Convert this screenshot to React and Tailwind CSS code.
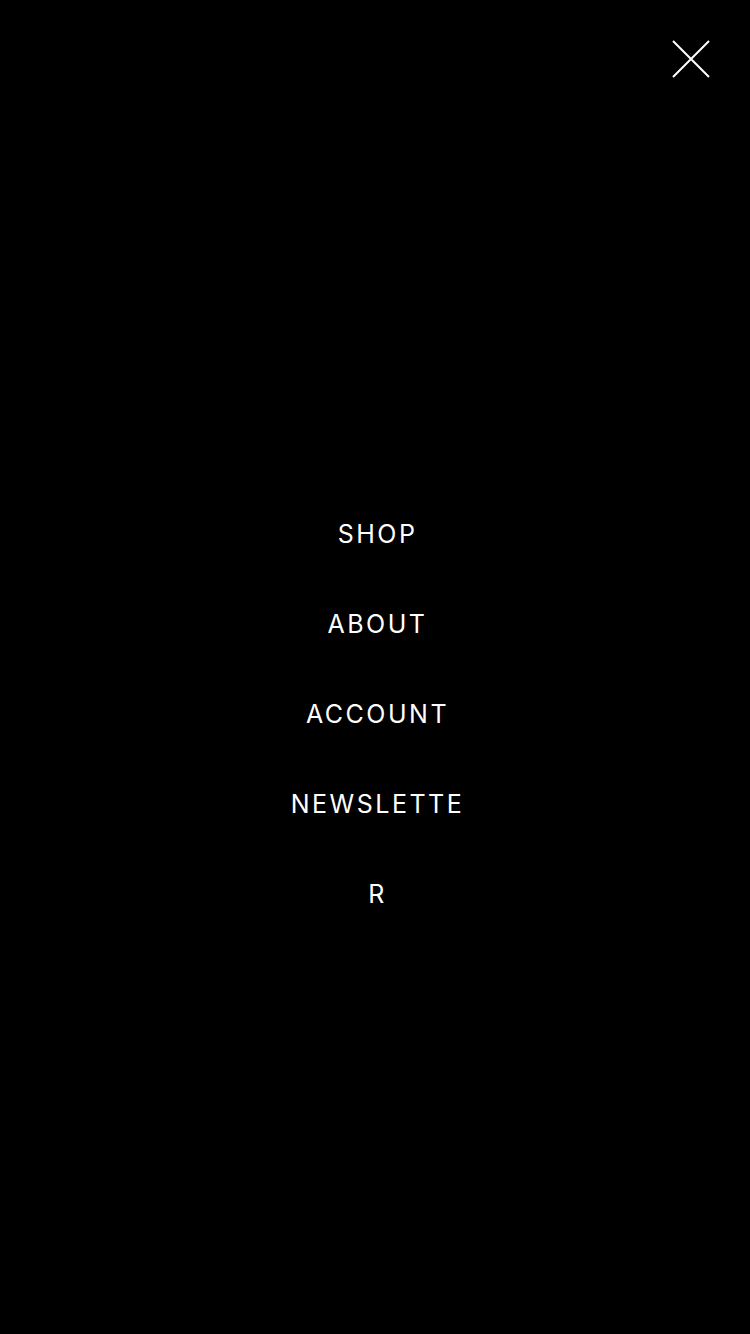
import React from 'react';

const links = ['SHOP', 'ABOUT', 'ACCOUNT', 'NEWSLETTER'];

export default function App() {
    return (
        <div className="flex h-screen w-full flex-col bg-black" style={{fontFamily: 'Inter, "Noto Sans", sans-serif'}}>
            <header className="flex h-[94px] shrink-0 justify-end pr-[40px] pt-[40px]">
                <button aria-label="Close Menu" className="h-[38px] w-[38px] text-white">
                    <svg viewBox="0 0 38 38" className="h-full w-full" fill="none" stroke="currentColor" strokeWidth="2">
                        <path d="M1 1L37 37M37 1L1 37"/>
                    </svg>
                </button>
            </header>
            <nav className="flex flex-1 items-center justify-center pl-[5px]">
                <ul className="w-[182px] text-center">
                    {links.map((link) => (
                        <li key={link} className="break-all text-[25px] leading-[90px] tracking-[2.5px] text-white">
                            <a href="#">{link}</a>
                        </li>
                    ))}
                </ul>
            </nav>
        </div>
    );
}
